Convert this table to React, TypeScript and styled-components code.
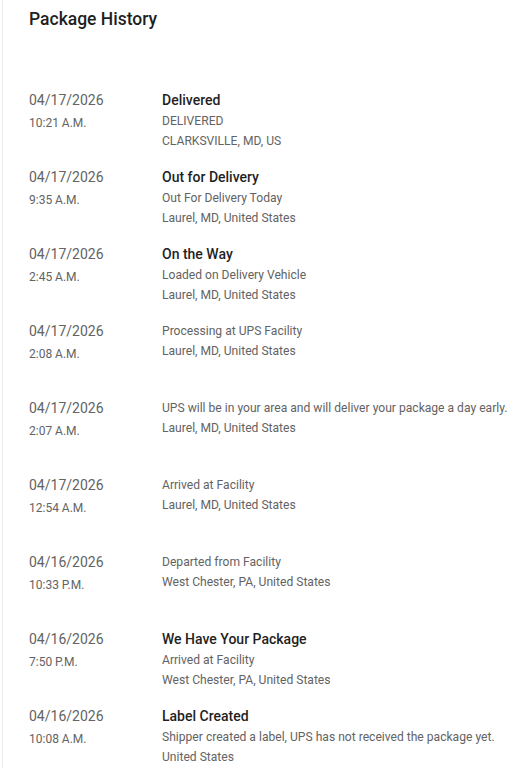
import React from "react";
import styled, { createGlobalStyle } from "styled-components";

const Global = createGlobalStyle`
  html, body { margin: 0; padding: 0; background: #ffffff; }
  body { font-family: Roboto, "Liberation Sans", Arial, sans-serif; }
`;

const Panel = styled.div`
  margin-left: 2px;
  border-left: 1px solid #ededed;
  padding: 7px 0 0 26px;
  min-height: 768px;
  box-sizing: border-box;
`;

const Title = styled.h2`
  margin: 0;
  font-size: 17.5px;
  line-height: 24px;
  font-weight: 500;
  color: #1f1f1f;
`;

const List = styled.div`
  margin-top: 59px;
  display: flex;
  flex-direction: column;
`;

const Row = styled.div`
  display: grid;
  grid-template-columns: 133px 1fr;
  height: 77px;
`;

const When = styled.div`
  display: flex;
  flex-direction: column;
`;

const DateText = styled.div`
  font-size: 14px;
  line-height: 20px;
  color: #636363;
`;

const TimeText = styled.div`
  margin-top: 3px;
  font-size: 12px;
  line-height: 20px;
  color: #636363;
`;

const What = styled.div`
  display: flex;
  flex-direction: column;
`;

const Status = styled.div`
  font-size: 14px;
  line-height: 20px;
  font-weight: 500;
  color: #1f1f1f;
  margin-bottom: 1px;
`;

const Line = styled.div`
  font-size: 12.1px;
  line-height: 20px;
  color: #636363;
  white-space: nowrap;
`;

type Ev = { date: string; time: string; status?: string; lines: string[] };

const events: Ev[] = [
  { date: "04/17/2026", time: "10:21 A.M.", status: "Delivered", lines: ["DELIVERED", "CLARKSVILLE, MD, US"] },
  { date: "04/17/2026", time: "9:35 A.M.", status: "Out for Delivery", lines: ["Out For Delivery Today", "Laurel, MD, United States"] },
  { date: "04/17/2026", time: "2:45 A.M.", status: "On the Way", lines: ["Loaded on Delivery Vehicle", "Laurel, MD, United States"] },
  { date: "04/17/2026", time: "2:08 A.M.", lines: ["Processing at UPS Facility", "Laurel, MD, United States"] },
  { date: "04/17/2026", time: "2:07 A.M.", lines: ["UPS will be in your area and will deliver your package a day early.", "Laurel, MD, United States"] },
  { date: "04/17/2026", time: "12:54 A.M.", lines: ["Arrived at Facility", "Laurel, MD, United States"] },
  { date: "04/16/2026", time: "10:33 P.M.", lines: ["Departed from Facility", "West Chester, PA, United States"] },
  { date: "04/16/2026", time: "7:50 P.M.", status: "We Have Your Package", lines: ["Arrived at Facility", "West Chester, PA, United States"] },
  { date: "04/16/2026", time: "10:08 A.M.", status: "Label Created", lines: ["Shipper created a label, UPS has not received the package yet.", "United States"] },
];

export default function App() {
  return (
    <>
      <Global />
      <Panel>
        <Title>Package History</Title>
        <List>
          {events.map((e, i) => (
            <Row key={i}>
              <When>
                <DateText>{e.date}</DateText>
                <TimeText>{e.time}</TimeText>
              </When>
              <What>
                {e.status && <Status>{e.status}</Status>}
                {e.lines.map((l, j) => (
                  <Line key={j}>{l}</Line>
                ))}
              </What>
            </Row>
          ))}
        </List>
      </Panel>
    </>
  );
}
